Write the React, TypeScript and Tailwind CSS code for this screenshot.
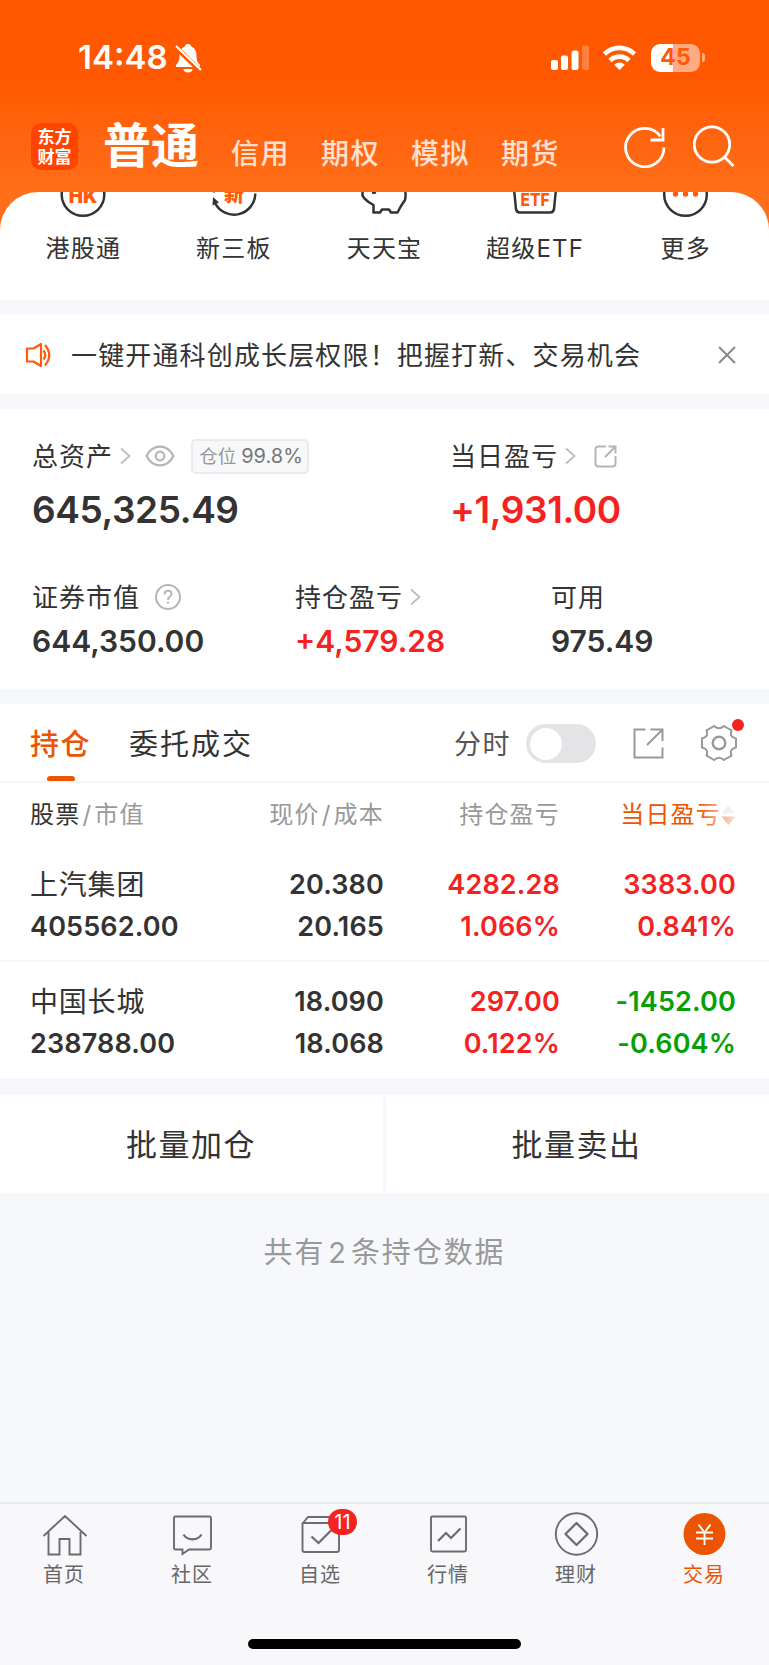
import type { ReactNode } from "react"
import clsx from "clsx"

type Quick = { label: string; icon: ReactNode }

type Holding = {
  name: string
  value: string
  price: string
  cost: string
  profit: string
  profitRate: string
  today: string
  todayRate: string
}

const accounts = ["信用", "期权", "模拟", "期货"]

const holdings: Holding[] = [
  {
    name: "上汽集团",
    value: "405562.00",
    price: "20.380",
    cost: "20.165",
    profit: "4282.28",
    profitRate: "1.066%",
    today: "3383.00",
    todayRate: "0.841%",
  },
  {
    name: "中国长城",
    value: "238788.00",
    price: "18.090",
    cost: "18.068",
    profit: "297.00",
    profitRate: "0.122%",
    today: "-1452.00",
    todayRate: "-0.604%",
  },
]

const quicks: Quick[] = [
  {
    label: "港股通",
    icon: (
      <>
        <circle cx="24" cy="2.500" r="21.300" stroke="#333" strokeWidth="2.500" />
        <text x="24" y="10.500" textAnchor="middle" fontSize="19" fontWeight="900" fill="#ff5a0a">
          HK
        </text>
      </>
    ),
  },
  {
    label: "新三板",
    icon: (
      <>
        <path d="M5 11A21.300 21.300 0 0 0 45.300 1.500" stroke="#333" strokeWidth="2.500" />
        <path d="M3 5l6 5.500-6.500 3z" fill="#333" />
        <path d="M3-1h2v1.500h-2z" fill="#333" />
        <text x="24" y="9.500" textAnchor="middle" fontSize="20" fontWeight="900" fill="#ff5a0a">
          新
        </text>
      </>
    ),
  },
  {
    label: "天天宝",
    icon: (
      <>
        <path
          d="M2.500-2v5.500l2 3 4 3.500 5 3v7.500h6.500l2-3h7l2 3h6.500l3.500-6.500 4-6c1-4 1-7-.500-12"
          stroke="#333"
          strokeWidth="2.500"
          strokeLinejoin="round"
        />
        <circle cx="14" cy="0" r="2.300" fill="#333" />
      </>
    ),
  },
  {
    label: "超级ETF",
    icon: (
      <>
        <path
          d="M3-3l2 20q.500 3.500 4 3.500h30q3.500 0 4-3.500l2-20"
          stroke="#333"
          strokeWidth="2.500"
        />
        <text x="24" y="13.500" textAnchor="middle" fontSize="18" fontWeight="800" fill="#ff5a0a" textLength="29" lengthAdjust="spacingAndGlyphs">
          ETF
        </text>
      </>
    ),
  },
  {
    label: "更多",
    icon: (
      <>
        <circle cx="23.500" cy="2.500" r="21.300" stroke="#333" strokeWidth="2.500" />
        <g fill="#ff5a0a">
          <circle cx="13.500" cy="2" r="2.700" />
          <circle cx="23.500" cy="2" r="2.700" />
          <circle cx="33.500" cy="2" r="2.700" />
        </g>
      </>
    ),
  },
]

const tabs: Quick[] = [
  {
    label: "首页",
    icon: <path d="M1.500 22L23 2l21.500 20M6.500 18v22.500h11V25h10v15.500h11V18" />,
  },
  {
    label: "社区",
    icon: (
      <>
        <path d="M5.500 2.500h34q1.500 0 1.500 1.500v30q0 1.500-1.500 1.500h-20.500l-6.500 4.500v-4.500h-7q-1.500 0-1.500-1.500v-30q0-1.500 1.500-1.500z" />
        <path d="M13.500 20.500c4 6.500 14 6.500 18 0" strokeWidth="2.200" />
      </>
    ),
  },
  {
    label: "自选",
    icon: (
      <>
        <path d="M5 9l5-6h29M5 9h36v27q0 2-2 2H6.500q-2 0-2-2V9.500z" />
        <path d="M13.500 22.500l7 6.500 14-14" strokeWidth="2.200" />
      </>
    ),
  },
  {
    label: "行情",
    icon: (
      <>
        <rect x="5" y="2.500" width="35" height="35" rx="1.500" />
        <path d="M12 27l8-8 5 5 9.500-9.500" strokeWidth="2.200" />
      </>
    ),
  },
  {
    label: "理财",
    icon: (
      <>
        <circle cx="22.500" cy="20" r="20.700" />
        <path d="M22.500 9l11 11-11 11-11-11z" strokeLinejoin="round" strokeWidth="2.200" />
      </>
    ),
  },
  {
    label: "交易",
    icon: (
      <>
        <circle cx="22.500" cy="20" r="21" fill="#eb5502" stroke="none" />
        <path d="M16.500 10.500l6 8 6-8M14 18.500h17M14 24.500h17M22.500 18.500v12.500" stroke="#fff" />
      </>
    ),
  },
]

function Chevron({ className }: { className?: string }) {
  return (
    <svg width="11" height="18" viewBox="0 0 11 18" fill="none" stroke="#bdbdbf" strokeWidth="1.800" className={className}>
      <path d="M1 1.500l8.500 7.500L1 16.500" />
    </svg>
  )
}

function StatusBar() {
  return (
    <div className="flex h-[115px] items-center pl-[78px] text-white">
      <span className="w-[97px] text-[33px] leading-none font-semibold">14:48</span>
      <svg width="27" height="30" viewBox="0 0 27 30">
        <path
          d="M13 1c-2 0-3 1.200-3.300 2.500C6 5 4.500 8.500 4.500 13c0 5-1.500 7-3.500 9v2h24v-2c-2-2-3.500-4-3.500-9 0-4.500-1.500-8-5.200-9.500C16 2.200 15 1 13 1zM8.500 26a4.500 3.500 0 0 0 9 0z"
          fill="#fff"
        />
        <path d="M-1 2.500l26.500 25.500" stroke="#ff5800" strokeWidth="5" />
        <path d="M1 3l25 24" stroke="#fff" strokeWidth="2.200" />
      </svg>
      <svg width="38" height="26" viewBox="0 0 38 26" fill="#fff" className="ml-[349px]">
        <rect x="0" y="15" width="7" height="10" rx="2" />
        <rect x="10" y="10.500" width="7" height="14.500" rx="2" />
        <rect x="20.500" y="5.500" width="7" height="19.500" rx="2" />
        <rect x="31" y="0.500" width="7" height="24.500" rx="2" opacity="0.250" />
      </svg>
      <svg width="33" height="26" viewBox="0 0 33 26" fill="none" stroke="#fff" strokeWidth="4.600" className="ml-[14px]">
        <path d="M1.500 9a21.500 21.500 0 0 1 30 0" />
        <path d="M7 15.500a13.600 13.600 0 0 1 19 0" />
        <path d="M16.500 25l-5.300-5.300a7.500 7.500 0 0 1 10.600 0z" fill="#fff" stroke="none" />
      </svg>
      <span className="ml-[15px] flex h-[28px] w-[49px] items-center justify-center rounded-[9px] bg-linear-to-r from-white from-45% to-white/50 to-45% text-[23px] leading-none font-bold text-[#ff5a05]">
        45
      </span>
      <span className="ml-[2px] h-[9px] w-[3px] rounded-r-full bg-white/50" />
    </div>
  )
}

function AccountBar() {
  return (
    <div className="flex h-[77px] items-start pl-[31px]">
      <div className="mt-[8px] flex h-[47px] w-[47px] flex-col items-center justify-center rounded-[10px] bg-[#ff4400] text-[17px] leading-[20px] font-bold text-white">
        <span>东方</span>
        <span>财富</span>
      </div>
      <h1 className="mt-[7px] ml-[25px] w-[128px] text-[48px] leading-none font-bold whitespace-nowrap text-white">普通</h1>
      <div className="mt-[25px] flex w-[393px] text-[28px] leading-none font-medium tracking-[1.500px] text-white/80">
        {accounts.map((a) => (
          <span key={a} className="w-[90px]">
            {a}
          </span>
        ))}
      </div>
      <svg width="42" height="42" viewBox="0 0 42 42" fill="none" stroke="#fff" strokeWidth="2.800" className="mt-[11px]">
        <path d="M40 21.500A19.200 19.200 0 1 1 36.500 10.500" />
        <path d="M39 2v12H26.500" />
      </svg>
      <svg width="42" height="42" viewBox="0 0 42 42" fill="none" stroke="#fff" strokeWidth="2.800" className="mt-[10px] ml-[27px]">
        <circle cx="19" cy="19.500" r="17.700" />
        <path d="M31.500 32l9 9" />
      </svg>
    </div>
  )
}

function QuickRow() {
  return (
    <div className="h-[108px] bg-[#ff6e18]">
      <div className="grid h-full grid-cols-5 rounded-t-[38px] bg-white px-2">
        {quicks.map((q) => (
          <div key={q.label} className="flex flex-col items-center">
            <svg width="48" height="26" viewBox="0 0 48 26" fill="none">
              {q.icon}
            </svg>
            <span className="mt-[19px] text-[24px] leading-none tracking-[1.200px] whitespace-nowrap">{q.label}</span>
          </div>
        ))}
      </div>
    </div>
  )
}

function Notice() {
  return (
    <div className="mt-[15px] flex h-[79px] items-center bg-white pl-[25px]">
      <svg width="29" height="26" viewBox="0 0 29 26" fill="none" stroke="#ff5a0a" strokeWidth="2.200">
        <path d="M2 6.500h6.500L16 2v22l-7.500-4.500H2z" strokeLinejoin="round" />
        <path d="M18.500 8.500q3.500 4.500 0 9M20 3q8.500 10 0 20.500" />
      </svg>
      <span className="ml-[17px] w-[647px] pt-[2px] text-[26px] leading-none tracking-[1.150px] whitespace-nowrap">
        一键开通科创成长层权限！把握打新、交易机会
      </span>
      <svg width="18" height="18" viewBox="0 0 18 18" stroke="#888" strokeWidth="1.900">
        <path d="M1 1l16 16M17 1L1 17" />
      </svg>
    </div>
  )
}

function Assets() {
  return (
    <div className="mt-[15px] h-[280px] bg-white pt-[29px] pl-[32px]">
      <div className="flex">
        <div className="w-[418px]">
          <div className="flex h-[36px] items-center">
            <span className="pt-[2px] text-[26px] leading-none tracking-[1px]">总资产</span>
            <Chevron className="ml-[7px]" />
            <svg width="30" height="22" viewBox="0 0 30 22" fill="none" stroke="#b5b5b7" strokeWidth="2.200" className="ml-[14px]">
              <path d="M1.500 11C8-1.500 22-1.500 28.500 11 22 23.500 8 23.500 1.500 11z" strokeLinejoin="round" />
              <circle cx="15" cy="11" r="4.300" />
            </svg>
            <span className="ml-[16px] flex h-[35px] w-[118px] items-center justify-center rounded-[5px] border-2 border-[#e9eaed] bg-[#f7f8fa] pl-[2px] leading-none whitespace-nowrap">
              <span className="pt-px text-[18.500px] text-[#999]">仓位</span>
              <span className="ml-[5px] text-[20px] text-[#777]">99.8%</span>
            </span>
          </div>
          <div className="mt-[17px] text-[37px] leading-none font-semibold tracking-[-0.400px]">645,325.49</div>
        </div>
        <div>
          <div className="flex h-[36px] items-center">
            <span className="pt-[2px] text-[26px] leading-none tracking-[1px]">当日盈亏</span>
            <Chevron className="ml-[7px]" />
            <svg width="23" height="23" viewBox="0 0 23 23" fill="none" stroke="#b5b5b7" strokeWidth="2" className="ml-[18px]">
              <path d="M12 1.500H4.500q-3 0-3 3v14q0 3 3 3h14q3 0 3-3V11M14.500 1.500h7v7M21.500 1.500L11 12" />
            </svg>
          </div>
          <div className="mt-[17px] text-[37px] leading-none font-semibold tracking-[-0.400px] text-[#f52222]">+1,931.00</div>
        </div>
      </div>
      <div className="mt-[54px] flex">
        <div className="w-[263px]">
          <div className="flex h-[30px] items-center">
            <span className="pt-[2px] text-[26px] leading-none tracking-[1px]">证券市值</span>
            <svg width="26" height="26" viewBox="0 0 26 26" fill="none" stroke="#b5b5b7" strokeWidth="2" className="ml-[15px]">
              <circle cx="13" cy="13" r="12" />
              <path d="M9.500 10.500c0-5 7-5 7-.800 0 3-3.500 2.800-3.500 6.300M13 17.500v2" />
            </svg>
          </div>
          <div className="mt-[14px] text-[30px] leading-none font-semibold">644,350.00</div>
        </div>
        <div className="w-[256px]">
          <div className="flex h-[30px] items-center">
            <span className="pt-[2px] text-[26px] leading-none tracking-[1px]">持仓盈亏</span>
            <Chevron className="ml-[7px]" />
          </div>
          <div className="mt-[14px] text-[30px] leading-none font-semibold text-[#f52222]">+4,579.28</div>
        </div>
        <div>
          <div className="flex h-[30px] items-center">
            <span className="pt-[2px] text-[26px] leading-none tracking-[1px]">可用</span>
          </div>
          <div className="mt-[14px] text-[30px] leading-none font-semibold">975.49</div>
        </div>
      </div>
    </div>
  )
}

function PositionTabs() {
  return (
    <div className="mt-[15px] flex h-[79px] items-center border-b-2 border-[#f6f6f8] bg-white pl-[30px]">
      <div className="relative flex h-full w-[99px] items-center pt-[3px] text-[29px] leading-none font-medium tracking-[1.500px] text-[#eb5502]">
        持仓
        <span className="absolute bottom-0 left-[17px] h-[5px] w-[28px] rounded-t-[4px] rounded-b-[2px] bg-[#eb5502]" />
      </div>
      <span className="w-[325px] pt-[3px] text-[29px] leading-none tracking-[2px]">委托成交</span>
      <span className="w-[72px] pt-[3px] text-[27px] leading-none tracking-[1.500px] text-[#555]">分时</span>
      <button type="button" aria-label="分时" className="mt-[2px] flex h-[39px] w-[70px] items-center rounded-full bg-[#e4e4e6] pl-[4px]">
        <span className="h-[32px] w-[32px] rounded-full bg-white" />
      </button>
      <svg width="31" height="31" viewBox="0 0 31 31" fill="none" stroke="#999" strokeWidth="2" className="mt-px ml-[37px]">
        <path d="M12.500 1.500h-11v28h28V19.500M17.500 1.500h12V13M29.500 1.500L14 17" />
      </svg>
      <div className="relative mt-px ml-[37px]">
        <svg width="36" height="36" viewBox="0 0 36 36" fill="none" stroke="#999" strokeWidth="2">
          <path
            d="M35 22.500Q28 23.700 30.500 30.700L22.800 35Q18 30.500 13.200 35L5.500 30.700Q8 23.700 1 22.500V13.500Q8 12.300 5.500 5.300L13.200 1Q18 5.500 22.800 1L30.500 5.300Q28 12.300 35 13.500z"
            strokeLinejoin="round"
          />
          <circle cx="18" cy="18" r="6.300" strokeWidth="2.400" />
        </svg>
        <span className="absolute -top-[6px] left-[31px] h-[12px] w-[12px] rounded-full bg-[#f52222]" />
      </div>
    </div>
  )
}

function HoldingRow({ item }: { item: Holding }) {
  const loss = item.today.startsWith("-")
  return (
    <div className="grid h-[117px] grid-cols-[174px_180px_176px_176px] grid-rows-[42px_42px] items-center border-b-2 border-[#f6f6f8] bg-white pt-[18px] pl-[30px] text-right text-[27px] leading-none font-semibold tracking-[0.150px] last:h-[118px]">
      <span className="pt-[2px] text-left text-[28px] font-normal tracking-[0.800px] whitespace-nowrap">{item.name}</span>
      <span>{item.price}</span>
      <span className="text-[#f52222]">{item.profit}</span>
      <span className={clsx(loss ? "text-[#05a005]" : "text-[#f52222]")}>{item.today}</span>
      <span className="text-left">{item.value}</span>
      <span>{item.cost}</span>
      <span className="text-[#f52222]">{item.profitRate}</span>
      <span className={clsx(loss ? "text-[#05a005]" : "text-[#f52222]")}>{item.todayRate}</span>
    </div>
  )
}

function Positions() {
  return (
    <div>
      <div className="grid h-[62px] grid-cols-[174px_180px_176px_176px] items-center bg-white pt-[2px] pl-[30px] text-right text-[24px] leading-none tracking-[1.200px] text-[#999]">
        <span className="text-left">
          <span className="text-[#333]">股票</span>
          <span className="mx-[2px]">/</span>市值
        </span>
        <span>
          现价<span className="mx-[2px]">/</span>成本
        </span>
        <span>持仓盈亏</span>
        <span className="relative flex items-center justify-end text-[#eb5502]">
          当日盈亏
          <svg width="15" height="22" viewBox="0 0 15 22">
            <path d="M7.500 1l7 8.500H.500z" fill="#d5d5d5" />
            <path d="M.500 12.500h14l-7 8.500z" fill="#eb5502" />
          </svg>
          <span className="absolute -top-[4px] right-0 h-[34px] w-[38px] bg-linear-to-r from-white/0 to-white/85" />
        </span>
      </div>
      {holdings.map((h) => (
        <HoldingRow key={h.name} item={h} />
      ))}
    </div>
  )
}

function TabBar() {
  return (
    <nav className="grid h-[163px] grid-cols-6 border-t-2 border-[#e9eaec] bg-[#f8f8fb] pt-[10px] pr-px text-[20px] leading-none tracking-[1px] text-[#666]">
      {tabs.map((t, i) => (
        <div key={t.label} className={clsx("relative flex flex-col items-center", i === 5 && "text-[#eb5502]")}>
          <svg width="45" height="42" viewBox="0 0 45 42" fill="none" stroke="#6c6c6e" strokeWidth="1.900" overflow="visible">
            {t.icon}
          </svg>
          <span className="mt-[9px]">{t.label}</span>
          {i === 2 && (
            <span className="absolute -top-[5px] left-[72px] flex h-[26px] w-[29px] items-center justify-center rounded-full bg-[#f52222] text-[20px] tracking-normal text-white">
              11
            </span>
          )}
        </div>
      ))}
    </nav>
  )
}

export default function App() {
  return (
    <div className="flex h-[1665px] w-[769px] flex-col overflow-hidden bg-[#f7f8fb] font-['Inter','Noto_Sans_CJK_SC',sans-serif] text-[#333]">
      <header className="h-[192px] shrink-0 bg-linear-to-b from-[#ff5800] from-40% to-[#ff6e18]">
        <StatusBar />
        <AccountBar />
      </header>
      <QuickRow />
      <Notice />
      <Assets />
      <PositionTabs />
      <Positions />
      <div className="mt-[15px] grid h-[98px] grid-cols-2 gap-[3px] text-center text-[31px] leading-none tracking-[1.500px]">
        <button type="button" className="bg-white pt-px pr-px">批量加仓</button>
        <button type="button" className="bg-white pt-px pr-[2px]">批量卖出</button>
      </div>
      <p className="mt-[45px] text-center text-[29px] leading-none tracking-[1.900px] text-[#999]">
        共有<span className="mx-[3px]">2</span>条持仓数据
      </p>
      <div className="relative mt-auto">
        <TabBar />
        <span className="absolute bottom-[16px] left-[248px] h-[10px] w-[273px] rounded-full bg-black" />
      </div>
    </div>
  )
}
